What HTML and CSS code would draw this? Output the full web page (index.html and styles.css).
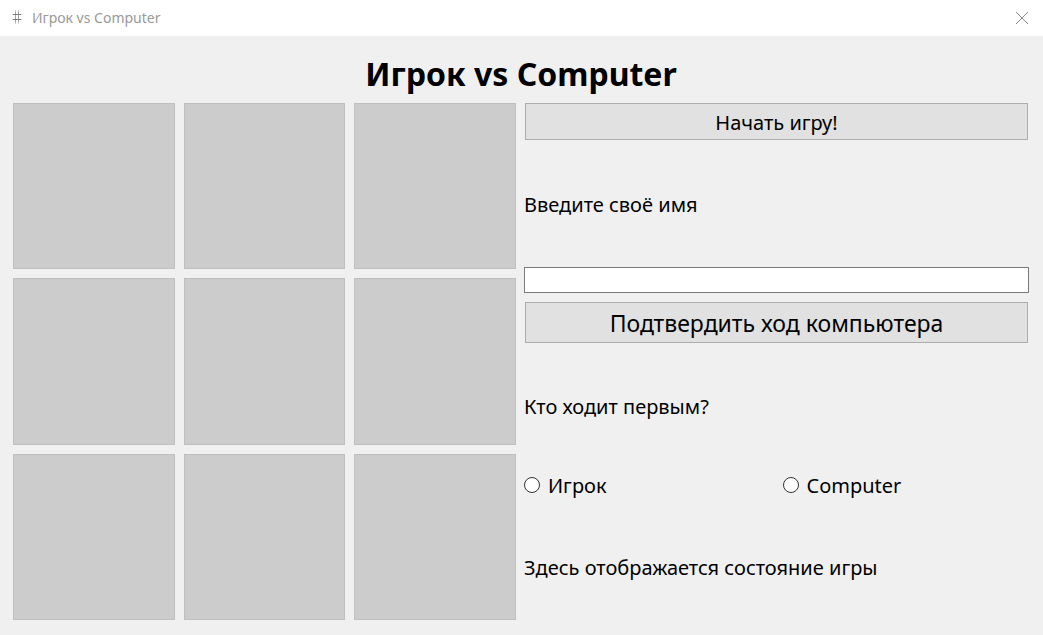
FILE: index.html
```html
<!DOCTYPE html>
<html lang="ru">
<head>
<meta charset="utf-8">
<title>Игрок vs Computer</title>
<link rel="stylesheet" href="styles.css">
</head>
<body>
<header class="titlebar">
  <svg class="app-icon" viewBox="0 0 12 16" aria-hidden="true"><path class="soft" d="M4.500 0v14M7.500 0v14"/><path d="M4.500 2v10M7.500 2v10M2 4.500h8M2 9.500h8"/><path class="soft" d="M1 4.500h10M1 9.500h10"/></svg>
  <span class="caption">Игрок vs Computer</span>
  <button class="close" aria-label="Закрыть"><svg viewBox="0 0 12 12"><path d="M0 0L12 12M12 0L0 12"/></svg></button>
</header>
<main class="window">
  <h1 class="heading">Игрок vs Computer</h1>
  <div class="content">
    <div class="board">
      <button class="cell" aria-label="1"></button>
      <button class="cell" aria-label="2"></button>
      <button class="cell" aria-label="3"></button>
      <button class="cell" aria-label="4"></button>
      <button class="cell" aria-label="5"></button>
      <button class="cell" aria-label="6"></button>
      <button class="cell" aria-label="7"></button>
      <button class="cell" aria-label="8"></button>
      <button class="cell" aria-label="9"></button>
    </div>
    <form class="panel">
      <button class="btn" type="button">Начать игру!</button>
      <label class="label name-label" for="name">Введите своё имя</label>
      <input class="name" id="name" type="text">
      <button class="btn btn-large" type="button">Подтвердить ход компьютера</button>
      <p class="label" id="first">Кто ходит первым?</p>
      <div class="choices" role="radiogroup" aria-labelledby="first">
        <label class="choice"><input class="radio" type="radio" name="first"><span class="choice-text">Игрок</span></label>
        <label class="choice"><input class="radio" type="radio" name="first"><span class="choice-text">Computer</span></label>
      </div>
      <p class="label status">Здесь отображается состояние игры</p>
    </form>
  </div>
</main>
</body>
</html>
```
FILE: styles.css
```css
* { box-sizing: border-box; }
body {
  margin: 0;
  min-height: 100vh;
  display: flex;
  flex-direction: column;
  background: #f0f0f0;
  color: #000;
  font-family: "Noto Sans", "Open Sans", sans-serif;
}
.titlebar {
  display: flex;
  align-items: center;
  height: 36px;
  padding: 0 15px 0 11px;
  background: #fff;
}
.app-icon { width: 12px; height: 16px; fill: none; stroke: #a0a0a0; }
.app-icon .soft { stroke: #000; stroke-opacity: 0.2; }
.caption { margin-left: 9px; font-size: 14px; line-height: 20px; color: #999; }
.close { margin-left: auto; padding: 0; border: 0; background: none; display: flex; }
.close svg { width: 12px; height: 12px; fill: none; stroke: #888; overflow: visible; }
.window { flex: 1; display: flex; flex-direction: column; padding: 16px 14px 15px 13px; }
.heading { margin: 0 0 7px; text-align: center; font-size: 32px; line-height: 44px; font-weight: 700; }
.content { flex: 1; display: grid; grid-template-columns: 503fr 505fr; gap: 8px; }
.board { display: grid; grid-template: repeat(3, 1fr) / repeat(3, 1fr); gap: 9px; }
.cell { padding: 0; border: 1px solid #bfbfbf; background: #ccc; }
.panel {
  display: grid;
  grid-template-rows: auto 20fr auto auto 20fr auto 19fr;
  font-size: 20px;
  line-height: 28px;
}
.btn {
  height: 37px;
  margin: 0 1px;
  padding: 2px 0 0;
  border: 1px solid #adadad;
  background: #e1e1e1;
  color: #000;
  font: inherit;
}
.btn-large { height: 41px; font-size: 23px; }
.label { display: flex; align-items: center; margin: 0; padding-top: 2px; }
.name-label { padding-top: 4px; }
.status { padding-top: 16px; }
.name { height: 26px; margin-bottom: 9px; border: 1px solid #7a7a7a; background: #fff; font: inherit; }
.choices { display: grid; grid-template-columns: 1fr 1fr; gap: 12px; }
.choice { display: flex; align-items: center; gap: 8px; }
.choice-text { padding-top: 2px; }
.radio { appearance: none; width: 16px; height: 16px; margin: 0; border: 1px solid #333; border-radius: 50%; background: #fff; }
```
